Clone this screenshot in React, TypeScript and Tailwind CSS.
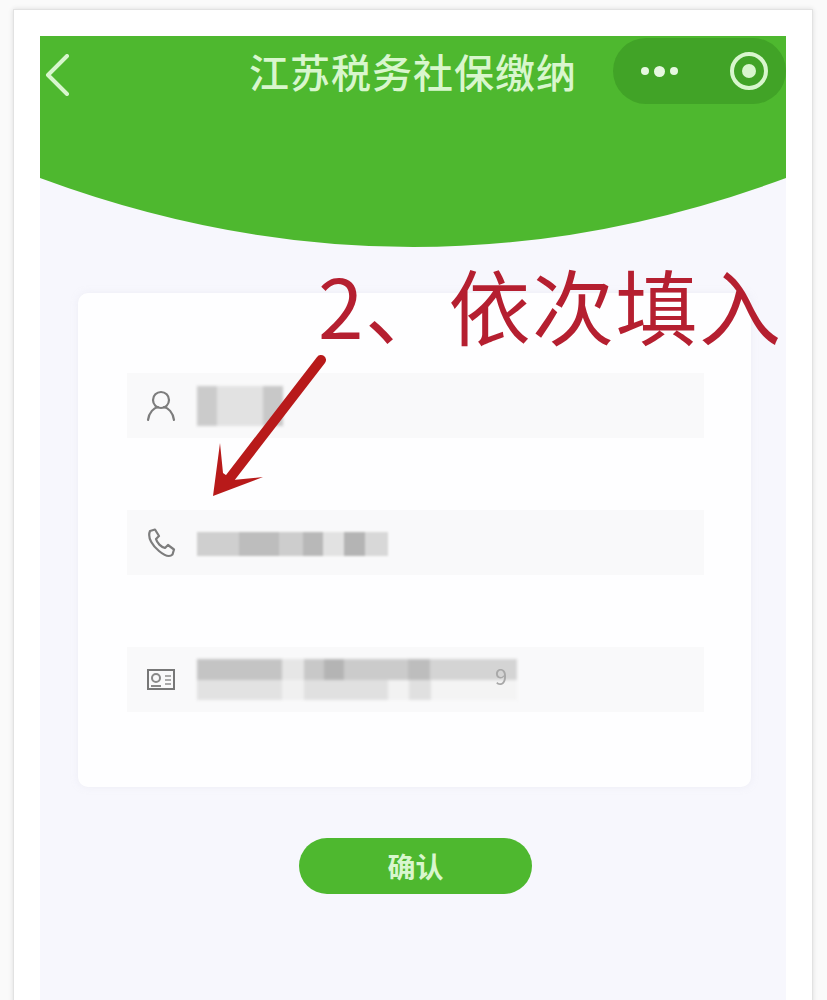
import React from "react";

const cjk = { fontFamily: '"Noto Sans CJK SC", "Noto Sans", sans-serif' };

function Seg({ w, c, h = "h-full" }: { w: string; c: string; h?: string }) {
  return <div className={`${w} ${c} ${h} shrink-0`} />;
}

function Field({ icon, children }: { icon: React.ReactNode; children: React.ReactNode }) {
  return (
    <div className="h-[65px] w-[577px] bg-[#f9f9fa] flex items-center">
      <div className="w-[70px] flex justify-center shrink-0 pr-[2px]">{icon}</div>
      {children}
    </div>
  );
}

export default function App() {
  return (
    <div className="w-[827px] h-[1000px] overflow-hidden bg-[#fafafa] pl-[13px] pt-[9px]" style={cjk}>
      <div className="w-[800px] h-[1000px] bg-white border border-[#e2e2e2] shadow-[0_0_5px_rgba(0,0,0,0.12)] pl-[26px] pt-[26px] relative">
        <div className="w-[746px] h-[1000px] bg-[#f7f7fd] relative">
          {/* Green header */}
          <div className="h-[142px] bg-[#4eb82f] relative flex justify-center pt-[8px]">
            <div className="absolute left-[4px] top-[18px]">
              <svg width="26" height="42" viewBox="0 0 26 42" fill="none">
                <path d="M23 2 L4 21 L23 40" stroke="#d8f6cd" strokeWidth="4" strokeLinecap="round" strokeLinejoin="round" />
              </svg>
            </div>
            <div className="text-[40px] leading-[54px] text-[#d8f6cd] tracking-[1px] font-medium">江苏税务社保缴纳</div>
            <div className="absolute right-0 top-[2px] w-[173px] h-[66px] bg-[#41a327] rounded-[33px] flex items-center">
              <div className="w-[92px] flex items-center justify-center gap-[5px]">
                <span className="w-[8px] h-[8px] rounded-full bg-[#e6f8e0]" />
                <span className="w-[11px] h-[11px] rounded-full bg-[#e6f8e0]" />
                <span className="w-[8px] h-[8px] rounded-full bg-[#e6f8e0]" />
              </div>
              <div className="ml-[25px] w-[38px] h-[38px] rounded-full border-[4px] border-[#d8f6cd] flex items-center justify-center">
                <span className="w-[14px] h-[14px] rounded-full bg-[#d8f6cd]" />
              </div>
            </div>
          </div>
          <svg className="block" width="746" height="69" viewBox="0 0 746 69">
            <path d="M0 0 H746 Q373 138 0 0 Z" fill="#4eb82f" />
          </svg>

          {/* Card */}
          <div className="ml-[38px] mt-[46px] w-[673px] h-[494px] bg-[#fefeff] rounded-[10px] pl-[49px] pt-[80px] flex flex-col gap-[72px] shadow-[0_0_6px_rgba(230,230,240,0.5)]">
            <Field
              icon={
                <svg width="30" height="32" viewBox="0 0 30 32" fill="none" stroke="#7d7d7d" strokeWidth="2.2" strokeLinecap="round">
                  <circle cx="15" cy="10" r="8" />
                  <path d="M2 30 C3 22 8 18 12 17 M28 30 C27 22 22 18 18 17" />
                </svg>
              }
            >
              <div className="flex h-[40px] w-[86px] blur-[1.5px]">
                <Seg w="w-[20px]" c="bg-[#cbcbcb]" />
                <Seg w="w-[46px]" c="bg-[#e2e2e2]" />
                <Seg w="w-[20px]" c="bg-[#c8c8c8]" />
              </div>
            </Field>
            <Field
              icon={
                <svg width="30" height="30" viewBox="0 0 30 30" fill="none" stroke="#7d7d7d" strokeWidth="2.2" strokeLinejoin="round">
                  <path d="M4 3 L9 1.5 L13 8 L10 11 C11 15 15 19 19 20 L22 17 L28 21.5 L26.5 26.5 C24 29 19 28 13 23 C7 18 1 10 4 3 Z" />
                </svg>
              }
            >
              <div className="flex h-[24px] w-[191px] blur-[1px] mt-[3px]">
                <Seg w="w-[42px]" c="bg-[#cfcfcf]" />
                <Seg w="w-[40px]" c="bg-[#bdbdbd]" />
                <Seg w="w-[24px]" c="bg-[#cdcdcd]" />
                <Seg w="w-[20px]" c="bg-[#b8b8b8]" />
                <Seg w="w-[21px]" c="bg-[#e2e2e2]" />
                <Seg w="w-[21px]" c="bg-[#b4b4b4]" />
                <Seg w="w-[23px]" c="bg-[#d8d8d8]" />
              </div>
            </Field>
            <Field
              icon={
                <svg width="28" height="22" viewBox="0 0 28 22" fill="none">
                  <rect x="1" y="1" width="26" height="19" stroke="#777" strokeWidth="2" />
                  <circle cx="9" cy="9" r="4" stroke="#888" strokeWidth="2" />
                  <path d="M4 17 H14" stroke="#888" strokeWidth="2" />
                  <path d="M18 7 H24 M18 11 H24 M18 15 H24" stroke="#aaa" strokeWidth="2" />
                </svg>
              }
            >
              <div className="relative w-[320px] h-[41px]">
                <div className="w-[320px] h-[41px] flex flex-col blur-[1.5px]">
                  <div className="flex h-[21px]">
                    <Seg w="w-[85px]" c="bg-[#c4c4c4]" />
                    <Seg w="w-[22px]" c="bg-[#e6e6e6]" />
                    <Seg w="w-[20px]" c="bg-[#c8c8c8]" />
                    <Seg w="w-[20px]" c="bg-[#b4b4b4]" />
                    <Seg w="w-[64px]" c="bg-[#cbcbcb]" />
                    <Seg w="w-[22px]" c="bg-[#bdbdbd]" />
                    <Seg w="w-[87px]" c="bg-[#d4d4d4]" />
                  </div>
                  <div className="flex h-[20px]">
                    <Seg w="w-[85px]" c="bg-[#e2e2e2]" />
                    <Seg w="w-[22px]" c="bg-[#f0f0f0]" />
                    <Seg w="w-[84px]" c="bg-[#e0e0e0]" />
                    <Seg w="w-[21px]" c="bg-[#f2f2f2]" />
                    <Seg w="w-[22px]" c="bg-[#e0e0e0]" />
                    <Seg w="w-[86px]" c="bg-[#f4f4f4]" />
                  </div>
                </div>
                <span className="absolute left-[298px] top-[1px] text-[22px] leading-[30px] text-[#a8a8a8] blur-[0.5px]">9</span>
              </div>
            </Field>
          </div>

          {/* Confirm button */}
          <div className="ml-[259px] mt-[51px] w-[233px] h-[56px] rounded-[28px] bg-[#4eb82f] flex items-center justify-center text-[28px] font-bold text-[#d8f6cd]">
            确认
          </div>
        </div>

        {/* Annotation overlay */}
        <div className="absolute left-[304px] top-[248px] text-[82px] leading-[92px] tracking-[1.5px] text-[#b51f30] whitespace-nowrap">
          2、依次填入
        </div>
        <svg className="absolute left-[180px] top-[330px]" width="150" height="170" viewBox="0 0 150 170">
          <path d="M127 20 L36 138" stroke="#b81a1a" strokeWidth="10" strokeLinecap="round" />
          <path d="M19 156 L26 103 L29 133 L39 140 L69 137 Z" fill="#b81a1a" />
        </svg>
      </div>
    </div>
  );
}
